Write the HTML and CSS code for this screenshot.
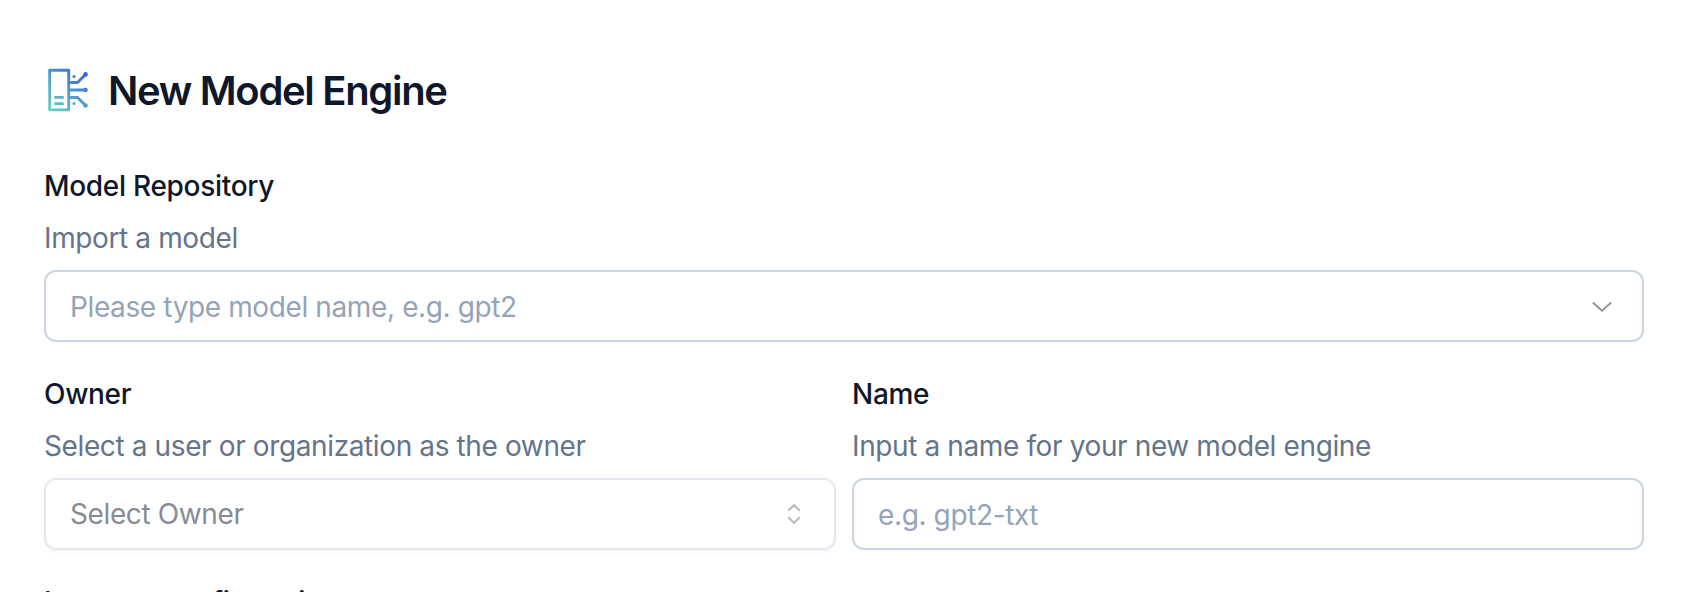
FILE: index.html
```html
<!DOCTYPE html>
<html lang="en">
<head>
  <meta charset="UTF-8">
  <meta name="viewport" content="width=device-width, initial-scale=1.0">
  <title>New Model Engine</title>
  <link rel="stylesheet" href="styles.css">
</head>
<body>
  <div class="container">
    <div class="header">
      <svg class="logo" viewBox="0 0 48 48" fill="none">
        <defs>
          <linearGradient id="logoGradient" gradientUnits="userSpaceOnUse" x1="6" y1="46" x2="42" y2="6">
            <stop offset="0" stop-color="#66d6bd"/>
            <stop offset="0.5" stop-color="#4f9dd2"/>
            <stop offset="1" stop-color="#3a5fe0"/>
          </linearGradient>
        </defs>
        <g stroke="url(#logoGradient)" stroke-width="2.9" stroke-linejoin="round">
          <rect x="5.7" y="4.3" width="19" height="39.6"/>
          <path d="M10.3 31.4h9.4M10.3 37.6h9.4"/>
          <path d="M25.5 16.5h8l8-8M25.5 24.01L41.5 24M25.5 31.5h8l8 8"/>
        </g>
        <g fill="url(#logoGradient)">
          <circle cx="41.5" cy="8.4" r="2.3"/>
          <circle cx="41.5" cy="24" r="2.3"/>
          <circle cx="41.5" cy="39.5" r="2.3"/>
          <circle cx="30" cy="10.6" r="1.5"/>
          <circle cx="30" cy="37.5" r="1.5"/>
        </g>
      </svg>
      <h1>New Model Engine</h1>
    </div>

    <form class="form">
      <!-- Model Repository -->
      <div class="field">
        <label for="model">Model Repository</label>
        <p>Import a model</p>
        <div class="control">
          <input type="text" id="model" placeholder="Please type model name, e.g. gpt2">
          <svg class="chevron" viewBox="0 0 24 24" fill="none" stroke="#90959f" stroke-width="2">
            <path d="M2.8 8.4l9.2 8.3 9.2-8.3"/>
          </svg>
        </div>
      </div>

      <!-- Owner & Name -->
      <div class="row">
        <div class="field">
          <label>Owner</label>
          <p>Select a user or organization as the owner</p>
          <button type="button" class="control select">
            <span>Select Owner</span>
            <svg class="sort" viewBox="0 0 24 24" fill="none" stroke="#b8babd" stroke-width="2">
              <path d="M6.2 8.7L12 3.2l5.8 5.5M6.2 15.3l5.8 5.5 5.8-5.5"/>
            </svg>
          </button>
        </div>
        <div class="field">
          <label for="name">Name</label>
          <p>Input a name for your new model engine</p>
          <div class="control">
            <input type="text" id="name" placeholder="e.g. gpt2-txt">
          </div>
        </div>
      </div>

      <div class="field">
        <label>Instance configuration</label>
      </div>
    </form>
  </div>
</body>
</html>
```
FILE: styles.css
```css
*, *::before, *::after {
  box-sizing: border-box;
}
body {
  margin: 0;
  height: 592px;
  overflow: hidden;
  background: #fff;
  color: #0f172a;
  font-family: Inter, "Liberation Sans", sans-serif;
  font-size: 28px;
  line-height: 40px;
  letter-spacing: -0.38px;
}
.container {
  padding: 54px 44px 0;
}
.header {
  display: flex;
  align-items: center;
  gap: 16px;
  height: 72px;
  margin-bottom: 40px;
}
.logo {
  width: 48px;
  height: 48px;
}
h1 {
  margin: 0;
  padding-top: 2px;
  font-size: 40px;
  line-height: 56px;
  font-weight: 600;
  letter-spacing: -1.32px;
}
.form {
  display: flex;
  flex-direction: column;
  gap: 32px;
}
.row {
  display: grid;
  grid-template-columns: 1fr 1fr;
  gap: 16px;
}
.field {
  display: flex;
  flex-direction: column;
  gap: 12px;
}
label {
  font-weight: 500;
  letter-spacing: -0.3px;
}
.field p {
  margin: 0;
  color: #64748b;
}
.control {
  display: flex;
  align-items: center;
  width: 100%;
  height: 72px;
  padding: 0 24px;
  border: 2px solid #cbd5e1;
  border-radius: 12px;
  background: #fff;
}
input {
  flex: 1;
  min-width: 0;
  padding: 2px 0 0;
  border: none;
  outline: none;
  background: none;
  color: #0f172a;
  font: inherit;
  letter-spacing: inherit;
}
input::placeholder {
  color: #94a3b8;
  opacity: 1;
}
.select {
  justify-content: space-between;
  border-color: #e4e8ee;
  box-shadow: 0 2px 4px rgba(0, 0, 0, 0.04);
  color: #878b94;
  font: inherit;
  letter-spacing: inherit;
  text-align: left;
}
.chevron, .sort {
  width: 24px;
  height: 24px;
  margin-right: 4px;
}
```
